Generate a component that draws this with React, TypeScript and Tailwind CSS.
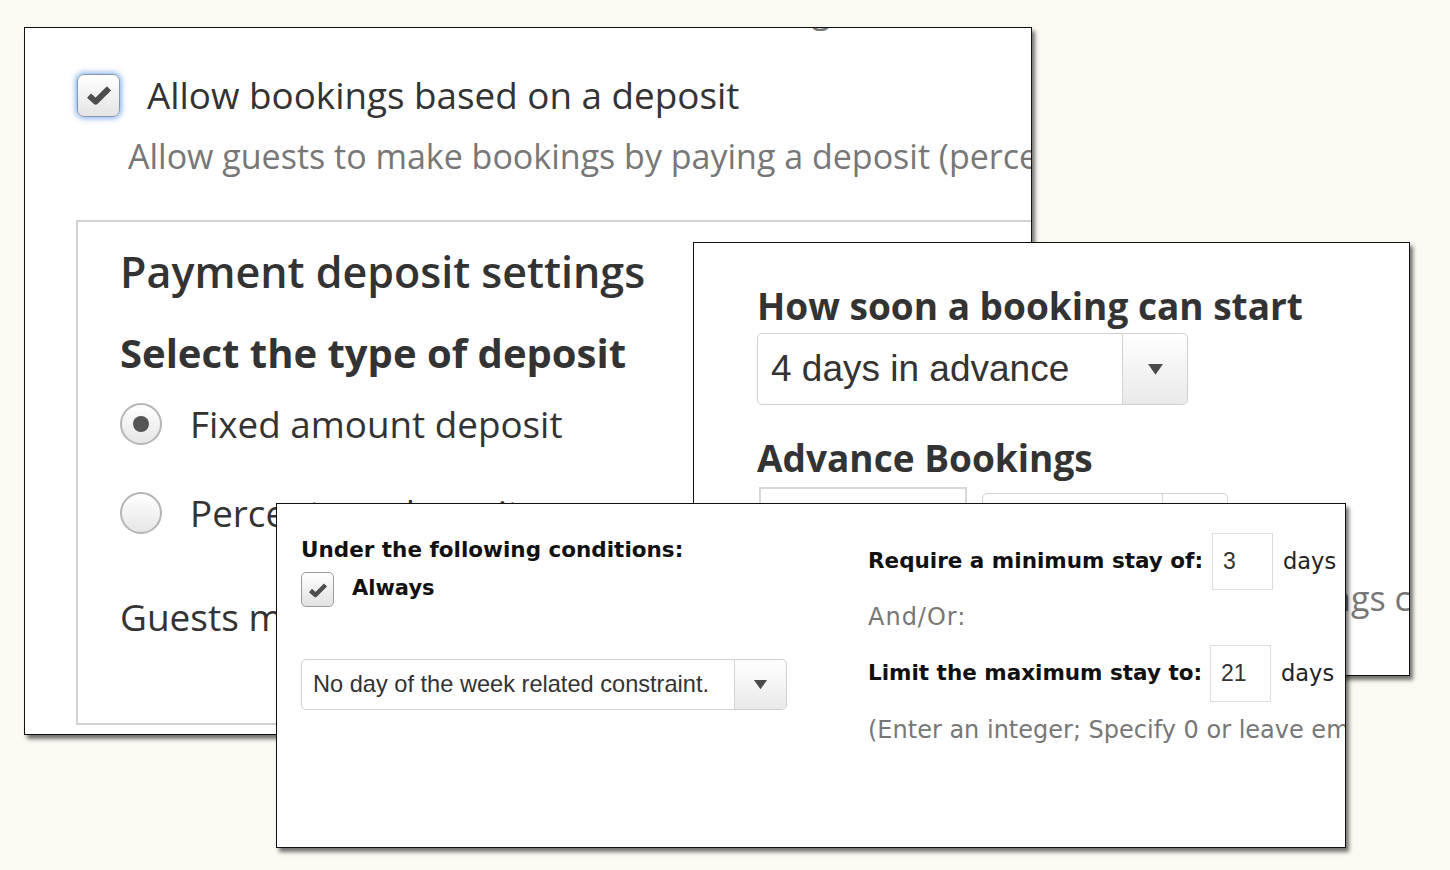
import React from "react";

const open = { fontFamily: '"Open Sans", "Noto Sans", sans-serif' };
const helv = { fontFamily: '"Liberation Sans", Arial, sans-serif' };
const lucida = { fontFamily: '"DejaVu Sans", "Liberation Sans", sans-serif' };

function Check({ size }: { size: number }) {
  return (
    <svg width={size} height={size} viewBox="0 0 24 24" fill="none">
      <path d="M4.5 12.5 L9.5 17 L19.5 7" stroke="#4d4d4d" strokeWidth="4.4" strokeLinejoin="round" />
    </svg>
  );
}

function Arrow({ w }: { w: number }) {
  return (
    <svg width={w} height={w * 0.75} viewBox="0 0 16 12">
      <path d="M1 1 H15 L8 11 Z" fill="#4a4a4a" />
    </svg>
  );
}

function Select({ label, className, textClass, btnClass, arrow }: { label: string; className: string; textClass: string; btnClass: string; arrow: number }) {
  return (
    <div className={`flex items-stretch rounded-[5px] border border-[#cfcfcf] bg-white ${className}`}>
      <div className={`flex flex-1 items-center text-[#333] ${textClass}`} style={helv}>
        {label}
      </div>
      <div className={`flex items-center justify-center border-l border-[#d4d4d4] bg-gradient-to-b from-white to-[#e9e9e9] rounded-r-[5px] ${btnClass}`}>
        <Arrow w={arrow} />
      </div>
    </div>
  );
}

function Radio({ checked }: { checked?: boolean }) {
  return (
    <div className="flex h-[42px] w-[42px] items-center justify-center rounded-full border-2 border-[#b5b5b5] bg-gradient-to-b from-white to-[#e6e6e6]">
      {checked && <div className="h-[16px] w-[16px] rounded-full bg-[#555]" />}
    </div>
  );
}

export default function App() {
  return (
    <div className="relative h-[870px] w-[1450px] overflow-hidden bg-[#fbfaf2]">
      {/* card 1 */}
      <div className="absolute left-[24px] top-[27px] h-[708px] w-[1008px] overflow-hidden border border-[#111] bg-white shadow-[3px_4px_4px_rgba(0,0,0,0.55)]" style={open}>
        <p className="-mt-[41px] whitespace-nowrap pl-[134px] text-[34px] leading-[46px] text-[#777]">
          The rest is due later at the time of booking
        </p>
        <div className="mt-[39px] flex items-center gap-[27px] pl-[52px]">
          <div className="flex h-[43px] w-[43px] items-center justify-center rounded-[7px] border border-[#8a96a8] bg-gradient-to-b from-white to-[#e4e4e4] shadow-[0_0_5px_2px_rgba(110,165,235,0.75)]">
            <Check size={32} />
          </div>
          <span className="whitespace-nowrap text-[36.8px] leading-[46px] text-[#333]">Allow bookings based on a deposit</span>
        </div>
        <p className="mt-[16px] whitespace-nowrap pl-[103px] text-[34px] leading-[44px] text-[#777]">
          Allow guests to make bookings by paying a deposit (percentage or fixed amount)
        </p>
        <div className="ml-[51px] mt-[42px] h-[505px] w-[1200px] border-2 border-[#d2d2d2] pl-[42px] pt-[22px]">
          <h2 className="whitespace-nowrap text-[43px] font-semibold leading-[56px] text-[#333]">Payment deposit settings</h2>
          <h3 className="mt-[28px] whitespace-nowrap text-[40px] font-bold leading-[50px] text-[#333]">Select the type of deposit</h3>
          <div className="mt-[22px] flex items-center gap-[28px]">
            <Radio checked />
            <span className="text-[36.8px] leading-[48px] text-[#333]">Fixed amount deposit</span>
          </div>
          <div className="mt-[41px] flex items-center gap-[28px]">
            <Radio />
            <span className="text-[36.8px] leading-[48px] text-[#333]">Percentage deposit</span>
          </div>
          <p className="mt-[56px] whitespace-nowrap text-[37px] leading-[48px] text-[#333]">Guests must pay a deposit of</p>
        </div>
      </div>

      {/* card 2 */}
      <div className="absolute left-[693px] top-[242px] h-[434px] w-[717px] overflow-hidden border border-[#111] bg-white pl-[63px] pt-[40px] shadow-[3px_4px_4px_rgba(0,0,0,0.55)]" style={open}>
        <h3 className="whitespace-nowrap text-[37px] font-bold leading-[46px] text-[#333]">How soon a booking can start</h3>
        <Select label="4 days in advance" className="mt-[4px] h-[72px] w-[431px]" textClass="pl-[13px] text-[37px]" btnClass="w-[65px]" arrow={17} />
        <h3 className="mt-[30px] whitespace-nowrap text-[37px] font-bold leading-[46px] text-[#333]">Advance Bookings</h3>
        <div className="mt-[6px] flex items-start gap-[15px]">
          <div className="ml-[2px] h-[60px] w-[208px] border-2 border-[#d8d8d8]" />
          <Select label="" className="mt-[6px] h-[60px] w-[246px]" textClass="" btnClass="w-[65px]" arrow={17} />
        </div>
        <p className="ml-[80px] mt-[22px] whitespace-nowrap text-[34px] leading-[46px] text-[#777]">Maximum time for which bookings can be made</p>
      </div>

      {/* card 3 */}
      <div className="absolute left-[276px] top-[503px] flex h-[345px] w-[1070px] overflow-hidden border border-[#111] bg-white pl-[24px] pt-[32px] shadow-[3px_4px_4px_rgba(0,0,0,0.55)]" style={lucida}>
        <div className="w-[567px] shrink-0">
          <p className="text-[21.5px] font-bold leading-[28px] text-[#111]">Under the following conditions:</p>
          <div className="mt-[8px] flex items-start gap-[18px]">
            <div className="flex h-[35px] w-[33px] items-center justify-center rounded-[5px] border border-[#999] bg-gradient-to-b from-white to-[#e2e2e2]">
              <Check size={24} />
            </div>
            <span className="pt-[3px] text-[21px] font-bold leading-[26px] text-[#111]">Always</span>
          </div>
          <Select label="No day of the week related constraint." className="mt-[52px] h-[51px] w-[486px]" textClass="pl-[11px] text-[23.6px]" btnClass="w-[52px]" arrow={15} />
        </div>
        <div className="-mt-[3px] shrink-0">
          <div className="flex items-center">
            <span className="w-[344px] whitespace-nowrap text-[21.5px] font-bold text-[#111]">Require a minimum stay of:</span>
            <div className="flex h-[57px] w-[61px] items-center border border-[#ddd] pl-[10px] text-[23px] text-[#333]" style={helv}>3</div>
            <span className="ml-[10px] text-[22.5px] text-[#222]">days</span>
          </div>
          <p className="mt-[11px] text-[24px] leading-[32px] tracking-[1px] text-[#777]">And/Or:</p>
          <div className="mt-[12px] flex items-center">
            <span className="w-[342px] whitespace-nowrap text-[21.5px] font-bold text-[#111]">Limit the maximum stay to:</span>
            <div className="flex h-[57px] w-[61px] items-center border border-[#ddd] pl-[10px] text-[23px] text-[#333]" style={helv}>21</div>
            <span className="ml-[10px] text-[22.5px] text-[#222]">days</span>
          </div>
          <p className="mt-[12px] whitespace-nowrap text-[24px] leading-[32px] text-[#777]">(Enter an integer; Specify 0 or leave empty for no limit)</p>
        </div>
      </div>
    </div>
  );
}
